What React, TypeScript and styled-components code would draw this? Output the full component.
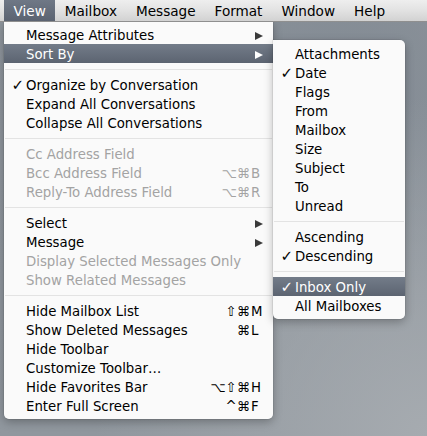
import React from "react";
import styled, { createGlobalStyle } from "styled-components";

const Global = createGlobalStyle`
  html, body { margin: 0; padding: 0; }
  body {
    width: 427px;
    height: 436px;
    overflow: hidden;
    font-family: "DejaVu Sans", "Noto Sans", sans-serif;
    font-size: 13.3px;
    -webkit-font-smoothing: antialiased;
  }
`;

const Desktop = styled.div`
  width: 427px;
  height: 436px;
  background:
    radial-gradient(ellipse at 100% 100%, #a6abb0 0%, rgba(166,171,176,0) 55%),
    radial-gradient(ellipse at 80% 20%, #838b94 0%, rgba(131,139,148,0) 50%),
    linear-gradient(180deg, #8d949b 0%, #90979e 100%);
  display: flex;
  flex-direction: column;
`;

const MenuBar = styled.div`
  height: 21px;
  display: flex;
  align-items: stretch;
  padding-left: 4px;
  background: linear-gradient(180deg, #eeeeee 0%, #e2e2e2 50%, #d2d2d2 100%);
  box-shadow: 0 1px 0 #8f8f8f;
  position: relative;
  z-index: 2;
  font-size: 13.6px;
`;

const BarItem = styled.div<{ $active?: boolean }>`
  display: flex;
  align-items: center;
  padding: 1px 9.5px 0;
  color: ${(p) => (p.$active ? "#fff" : "#000")};
  background: ${(p) =>
    p.$active ? "linear-gradient(180deg, #6f7886 0%, #5b6371 100%)" : "transparent"};
  line-height: 20px;
`;

const MenuArea = styled.div`
  display: flex;
  align-items: flex-start;
  padding-left: 4px;
`;

const Menu = styled.div<{ $sub?: boolean }>`
  width: ${(p) => (p.$sub ? "132px" : "269px")};
  margin-top: ${(p) => (p.$sub ? "19px" : "0")};
  padding: 4px 0;
  background: rgba(252, 252, 252, 0.98);
  border-radius: ${(p) => (p.$sub ? "0 5px 5px 5px" : "0 0 5px 5px")};
  box-shadow: 0 3px 10px rgba(0, 0, 0, 0.28), 0 0 0 0.5px rgba(0, 0, 0, 0.12);
  display: flex;
  flex-direction: column;
`;

const Item = styled.div<{ $selected?: boolean; $disabled?: boolean }>`
  box-sizing: border-box;
  height: 19px;
  padding-top: 2px;
  display: grid;
  grid-template-columns: 22px 1fr auto;
  align-items: center;
  padding-right: 10px;
  color: ${(p) => (p.$selected ? "#fff" : p.$disabled ? "#a3a3a3" : "#000")};
  background: ${(p) =>
    p.$selected ? "linear-gradient(180deg, #737c89 0%, #5c6471 100%)" : "transparent"};
  white-space: nowrap;
  line-height: 17px;
`;

const Check = styled.span`
  justify-self: end;
  padding-right: 2px;
  font-size: 15px;
`;

const Label = styled.span``;

const Shortcut = styled.span`
  display: flex;
  justify-content: flex-end;
  color: inherit;
`;

const Mods = styled.span`
  text-align: right;
`;

const Key = styled.span`
  width: 12px;
  text-align: left;
  padding-left: 1px;
`;

const Arrow = styled.svg`
  width: 8px;
  height: 8px;
  display: block;
`;

const Separator = styled.div`
  height: 12px;
  display: flex;
  align-items: center;
  &::after {
    content: "";
    flex: 1;
    height: 1px;
    margin: 0 1px;
    background: #e3e3e3;
  }
`;

type Entry =
  | { sep: true }
  | {
      sep?: false;
      label: string;
      check?: boolean;
      selected?: boolean;
      disabled?: boolean;
      sub?: boolean;
      mods?: string;
      key?: string;
    };

const mainItems: Entry[] = [
  { label: "Message Attributes", sub: true },
  { label: "Sort By", sub: true, selected: true },
  { sep: true },
  { label: "Organize by Conversation", check: true },
  { label: "Expand All Conversations" },
  { label: "Collapse All Conversations" },
  { sep: true },
  { label: "Cc Address Field", disabled: true },
  { label: "Bcc Address Field", disabled: true, mods: "⌥⌘", key: "B" },
  { label: "Reply-To Address Field", disabled: true, mods: "⌥⌘", key: "R" },
  { sep: true },
  { label: "Select", sub: true },
  { label: "Message", sub: true },
  { label: "Display Selected Messages Only", disabled: true },
  { label: "Show Related Messages", disabled: true },
  { sep: true },
  { label: "Hide Mailbox List", mods: "⇧⌘", key: "M" },
  { label: "Show Deleted Messages", mods: "⌘", key: "L" },
  { label: "Hide Toolbar" },
  { label: "Customize Toolbar…" },
  { label: "Hide Favorites Bar", mods: "⌥⇧⌘", key: "H" },
  { label: "Enter Full Screen", mods: "^⌘", key: "F" },
];

const subItems: Entry[] = [
  { label: "Attachments" },
  { label: "Date", check: true },
  { label: "Flags" },
  { label: "From" },
  { label: "Mailbox" },
  { label: "Size" },
  { label: "Subject" },
  { label: "To" },
  { label: "Unread" },
  { sep: true },
  { label: "Ascending" },
  { label: "Descending", check: true },
  { sep: true },
  { label: "Inbox Only", check: true, selected: true },
  { label: "All Mailboxes" },
];

function renderEntries(entries: Entry[]) {
  return entries.map((e, i) => {
    if (e.sep) return <Separator key={i} />;
    return (
      <Item key={i} $selected={e.selected} $disabled={e.disabled}>
        <Check>{e.check ? "✓" : ""}</Check>
        <Label>{e.label}</Label>
        {e.sub ? (
          <Arrow viewBox="0 0 8 8">
            <path d="M0 0 L8 4 L0 8 Z" fill={e.selected ? "#fff" : "#3a3a3a"} />
          </Arrow>
        ) : e.key ? (
          <Shortcut>
            <Mods>{e.mods}</Mods>
            <Key>{e.key}</Key>
          </Shortcut>
        ) : (
          <span />
        )}
      </Item>
    );
  });
}

export default function App() {
  return (
    <>
      <Global />
      <Desktop>
        <MenuBar>
          <BarItem $active>View</BarItem>
          <BarItem>Mailbox</BarItem>
          <BarItem>Message</BarItem>
          <BarItem>Format</BarItem>
          <BarItem>Window</BarItem>
          <BarItem>Help</BarItem>
        </MenuBar>
        <MenuArea>
          <Menu>{renderEntries(mainItems)}</Menu>
          <Menu $sub>{renderEntries(subItems)}</Menu>
        </MenuArea>
      </Desktop>
    </>
  );
}
